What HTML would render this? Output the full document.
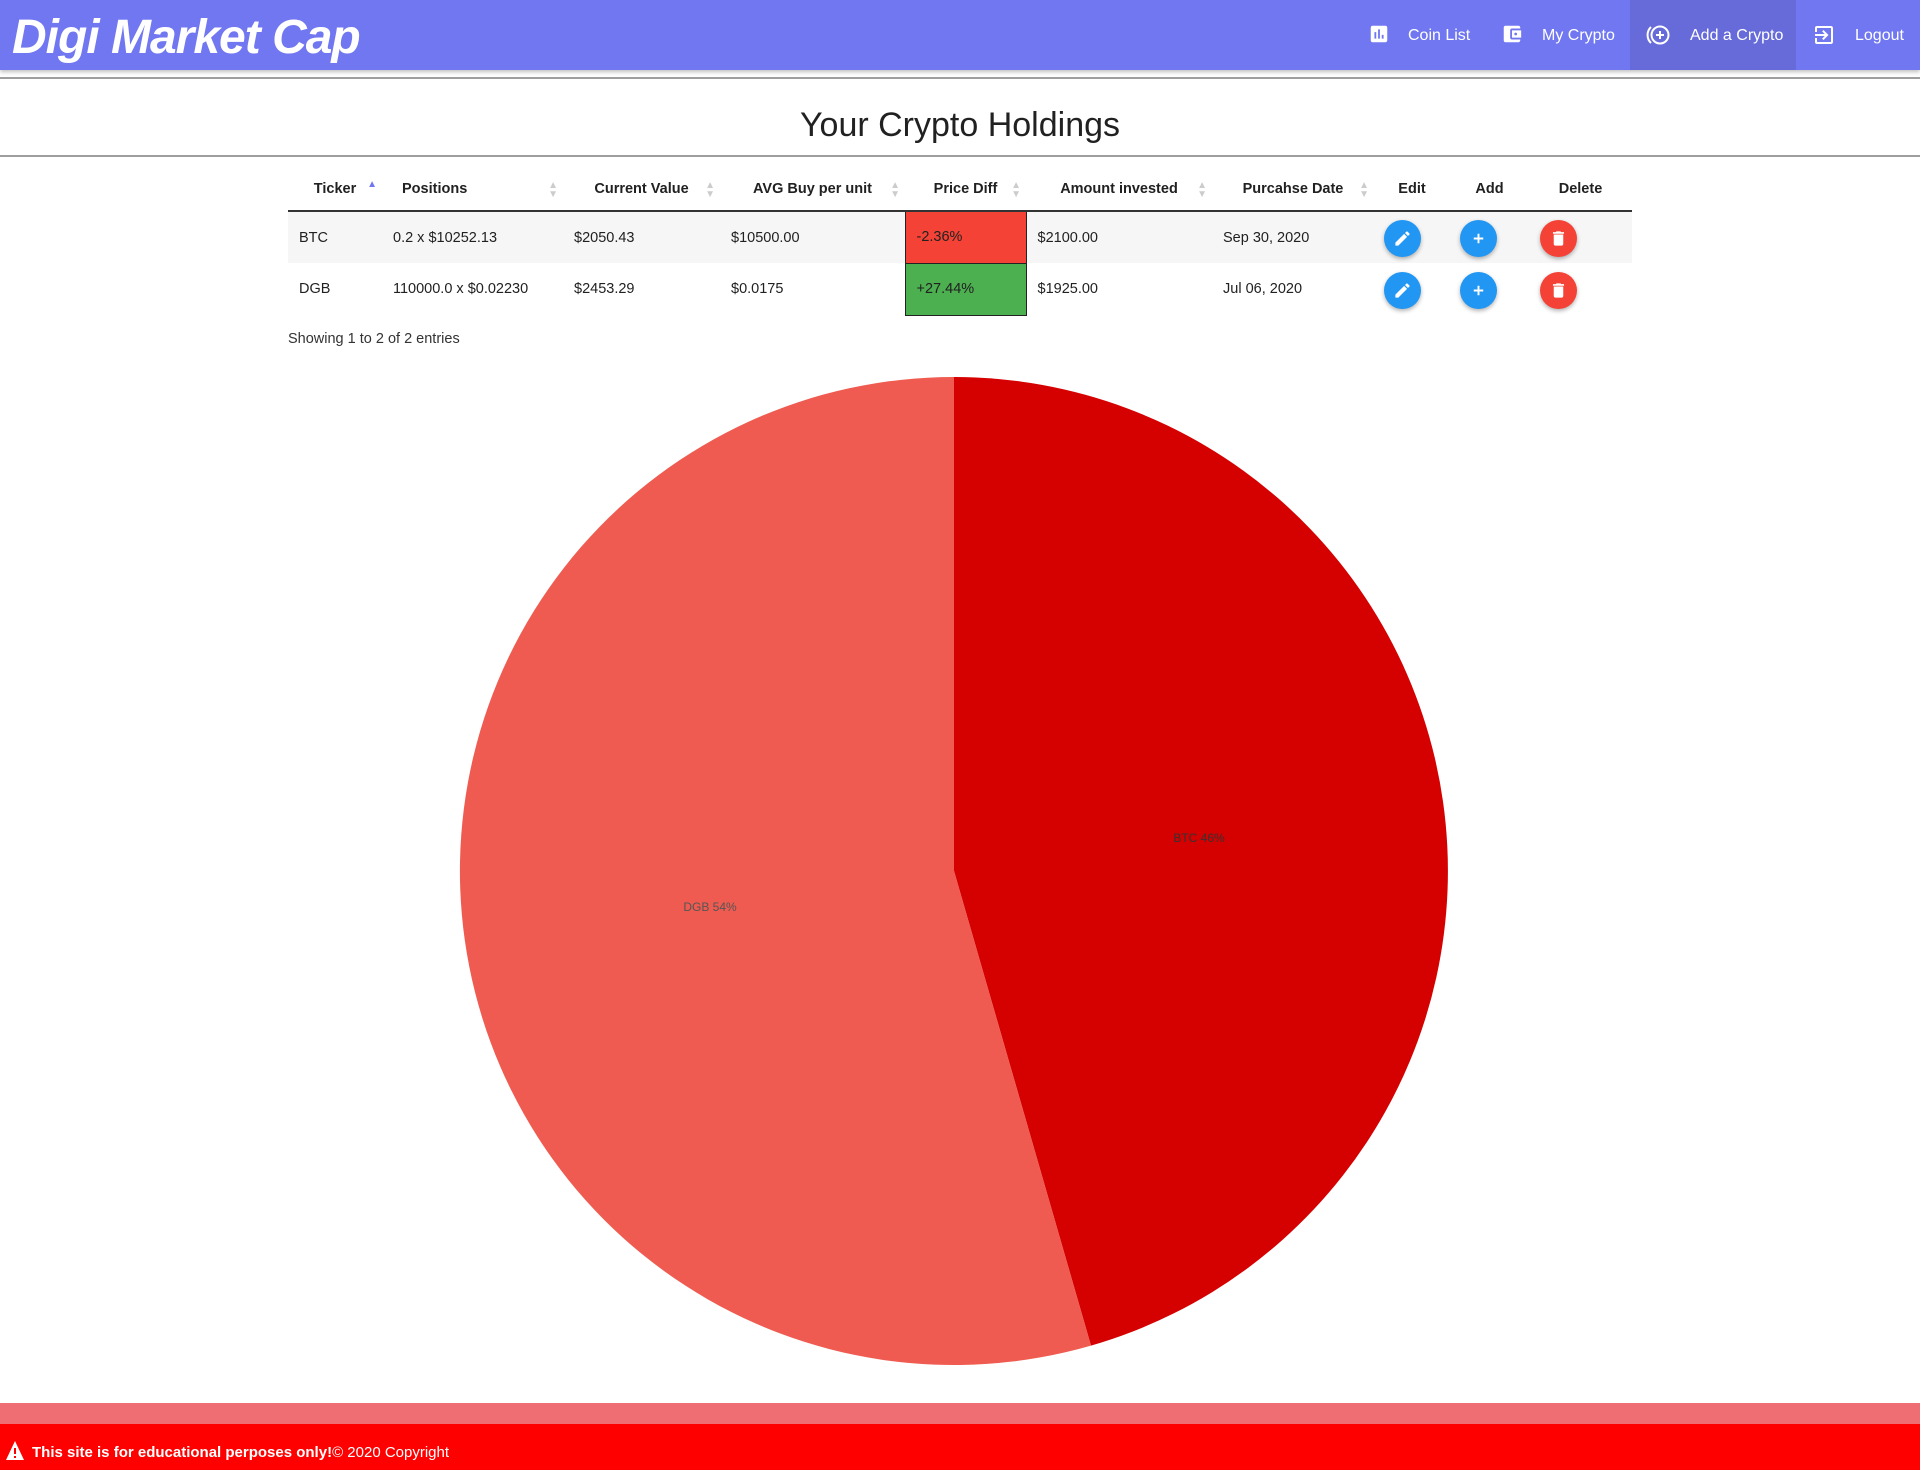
<!DOCTYPE html>
<html><head><meta charset="utf-8"><style>
*{margin:0;padding:0;box-sizing:border-box}
body{width:1920px;height:1470px;position:relative;background:#fff;font-family:"Liberation Sans",sans-serif;color:#212121;overflow:hidden}
.hdr{position:absolute;left:0;top:0;width:1920px;height:70px;background:#7077f0;box-shadow:0 2px 4px rgba(0,0,0,.25)}
.logo{position:absolute;left:12px;top:10px;font-size:48px;font-weight:bold;font-style:italic;color:#fff;letter-spacing:-1px;white-space:nowrap}
.nav{position:absolute;top:0;height:70px;color:#fff;font-size:16px;line-height:72px;white-space:nowrap}
.nav svg{position:absolute;top:23px}
.abs{position:absolute}
.hl{position:absolute;left:0;width:1920px;height:2px;background:#9e9e9e}
table{position:absolute;left:288px;top:168px;border-collapse:collapse;font-size:14.5px}
th{font-weight:bold;height:43px;border-bottom:2px solid #333;text-align:center;position:relative;padding:0}
td{height:52px;padding:0 0 0 11px}
tr.r1 td{background:#f6f6f6}
.sort{position:absolute;right:5px;top:13px;font-size:10px;color:#ccc;line-height:9px}
.btn{position:absolute;width:37px;height:37px;border-radius:50%;box-shadow:0 2px 4px rgba(0,0,0,.3)}
.b{background:#2196f3}.r{background:#f44336}
.btn svg{position:absolute;left:9px;top:9px}
</style></head><body>
<div class="hdr">
<div class="logo">Digi Market Cap</div>
<div class="nav" style="left:1630px;width:166px;background:#666bd9"></div>
<div class="nav" style="left:1368px;width:110px">
<svg style="left:0" width="22" height="22" viewBox="0 0 24 24"><path fill="#fff" d="M19 3H5c-1.1 0-2 .9-2 2v14c0 1.1.9 2 2 2h14c1.1 0 2-.9 2-2V5c0-1.1-.9-2-2-2zM9 17H7v-7h2v7zm4 0h-2V7h2v10zm4 0h-2v-4h2v4z"/></svg>
<span style="position:absolute;left:40px">Coin List</span></div>
<div class="nav" style="left:1500px;width:120px">
<svg style="left:0" width="24" height="22" viewBox="0 0 24 24"><path fill="#fff" d="M21 18v1c0 1.1-.9 2-2 2H5a2 2 0 0 1-2-2V5a2 2 0 0 1 2-2h14c1.1 0 2 .9 2 2v1h-9a2 2 0 0 0-2 2v8a2 2 0 0 0 2 2h9zm-9-2h10V8H12v8zm4-2.5a1.5 1.5 0 1 1 0-3 1.5 1.5 0 0 1 0 3z"/></svg>
<span style="position:absolute;left:42px">My Crypto</span></div>
<div class="nav" style="left:1646px;width:150px">
<svg style="left:0" width="26" height="24" viewBox="0 0 26 24"><circle cx="14" cy="12" r="8.5" fill="none" stroke="#fff" stroke-width="2"/><path d="M5 4a11 11 0 0 0 0 16" fill="none" stroke="#fff" stroke-width="2"/><path d="M14 8v8M10 12h8" stroke="#fff" stroke-width="2"/></svg>
<span style="position:absolute;left:44px">Add a Crypto</span></div>
<div class="nav" style="left:1812px;width:100px">
<svg style="left:0" width="24" height="24" viewBox="0 0 24 24"><path fill="#fff" d="M10.09 15.59L11.5 17l5-5-5-5-1.41 1.41L12.67 11H3v2h9.67l-2.58 2.59zM19 3H5a2 2 0 0 0-2 2v4h2V5h14v14H5v-4H3v4a2 2 0 0 0 2 2h14c1.1 0 2-.9 2-2V5c0-1.1-.9-2-2-2z"/></svg>
<span style="position:absolute;left:43px">Logout</span></div>
</div>
<div class="hl" style="top:77px"></div>
<div class="abs" style="left:0;width:1920px;top:106px;text-align:center;font-size:34px;color:#212121">Your Crypto Holdings</div>
<div class="hl" style="top:155px"></div>
<table>
<tr>
<th style="width:94px">Ticker<span class="sort" style="color:#7077f0;top:12px">▲</span></th>
<th style="width:181px;text-align:left;padding-left:20px">Positions<span class="sort">▲<br>▼</span></th>
<th style="width:157px">Current Value<span class="sort">▲<br>▼</span></th>
<th style="width:185px">AVG Buy per unit<span class="sort">▲<br>▼</span></th>
<th style="width:121px">Price Diff<span class="sort">▲<br>▼</span></th>
<th style="width:186px">Amount invested<span class="sort">▲<br>▼</span></th>
<th style="width:162px">Purcahse Date<span class="sort">▲<br>▼</span></th>
<th style="width:76px">Edit</th>
<th style="width:79px">Add</th>
<th style="width:103px">Delete</th>
</tr>
<tr class="r1"><td>BTC</td><td>0.2 x $10252.13</td><td>$2050.43</td><td>$10500.00</td><td style="background:#f44336;border:1px solid #222">-2.36%</td><td>$2100.00</td><td>Sep 30, 2020</td><td></td><td></td><td></td></tr>
<tr><td>DGB</td><td>110000.0 x $0.02230</td><td>$2453.29</td><td>$0.0175</td><td style="background:#4caf50;border:1px solid #222">+27.44%</td><td>$1925.00</td><td>Jul 06, 2020</td><td></td><td></td><td></td></tr>
</table>
<div class="abs" style="left:288px;top:331px;font-size:14.5px;color:#333">Showing 1 to 2 of 2 entries</div>

<div class="btn b" style="left:1384px;top:220px"><svg width="19" height="19" viewBox="0 0 24 24"><path fill="#fff" d="M3 17.25V21h3.75L17.81 9.94l-3.75-3.75L3 17.25zM20.71 7.04a1 1 0 0 0 0-1.41l-2.34-2.34a1 1 0 0 0-1.41 0l-1.830 1.83 3.75 3.75 1.83-1.83z"/></svg></div>
<div class="btn b" style="left:1460px;top:220px"><svg width="19" height="19" viewBox="0 0 24 24"><path d="M12 6v12M6 12h12" stroke="#fff" stroke-width="2.4"/></svg></div>
<div class="btn r" style="left:1540px;top:220px"><svg width="19" height="19" viewBox="0 0 24 24"><path fill="#fff" d="M6 19c0 1.1.9 2 2 2h8c1.1 0 2-.9 2-2V7H6v12zM19 4h-3.5l-1-1h-5l-1 1H5v2h14V4z"/></svg></div>
<div class="btn b" style="left:1384px;top:272px"><svg width="19" height="19" viewBox="0 0 24 24"><path fill="#fff" d="M3 17.25V21h3.75L17.81 9.94l-3.75-3.75L3 17.25zM20.71 7.04a1 1 0 0 0 0-1.41l-2.34-2.34a1 1 0 0 0-1.41 0l-1.83 1.83 3.75 3.75 1.83-1.83z"/></svg></div>
<div class="btn b" style="left:1460px;top:272px"><svg width="19" height="19" viewBox="0 0 24 24"><path d="M12 6v12M6 12h12" stroke="#fff" stroke-width="2.4"/></svg></div>
<div class="btn r" style="left:1540px;top:272px"><svg width="19" height="19" viewBox="0 0 24 24"><path fill="#fff" d="M6 19c0 1.1.9 2 2 2h8c1.1 0 2-.9 2-2V7H6v12zM19 4h-3.5l-1-1h-5l-1 1H5v2h14V4z"/></svg></div>

<svg class="abs" style="left:0;top:0" width="1920" height="1470">
<path d="M954,871 L954,377 A494,494 0 0,1 1091,1345.6 Z" fill="#d50000"/>
<path d="M954,871 L1091,1345.6 A494,494 0 1,1 954,377 Z" fill="#ef5b50"/>
<text x="1199" y="842" font-size="12" font-family="Liberation Sans" fill="#333" text-anchor="middle">BTC 46%</text>
<text x="710" y="911" font-size="12" font-family="Liberation Sans" fill="#555" text-anchor="middle">DGB 54%</text>
</svg>

<div class="abs" style="left:0;top:1403px;width:1920px;height:21px;background:#ef6e73"></div>
<div class="abs" style="left:0;top:1424px;width:1920px;height:46px;background:#ff0000"></div>
<svg class="abs" style="left:5px;top:1440px" width="20" height="22" viewBox="0 0 20 22"><path d="M10 1L19 20H1Z" fill="#fff"/><path d="M10 8v6M10 16v2" stroke="#f00" stroke-width="2"/></svg>
<div class="abs" style="left:32px;top:1444px;font-size:15px;color:#fff"><b>This site is for educational perposes only!</b>© 2020 Copyright</div>
</body></html>
